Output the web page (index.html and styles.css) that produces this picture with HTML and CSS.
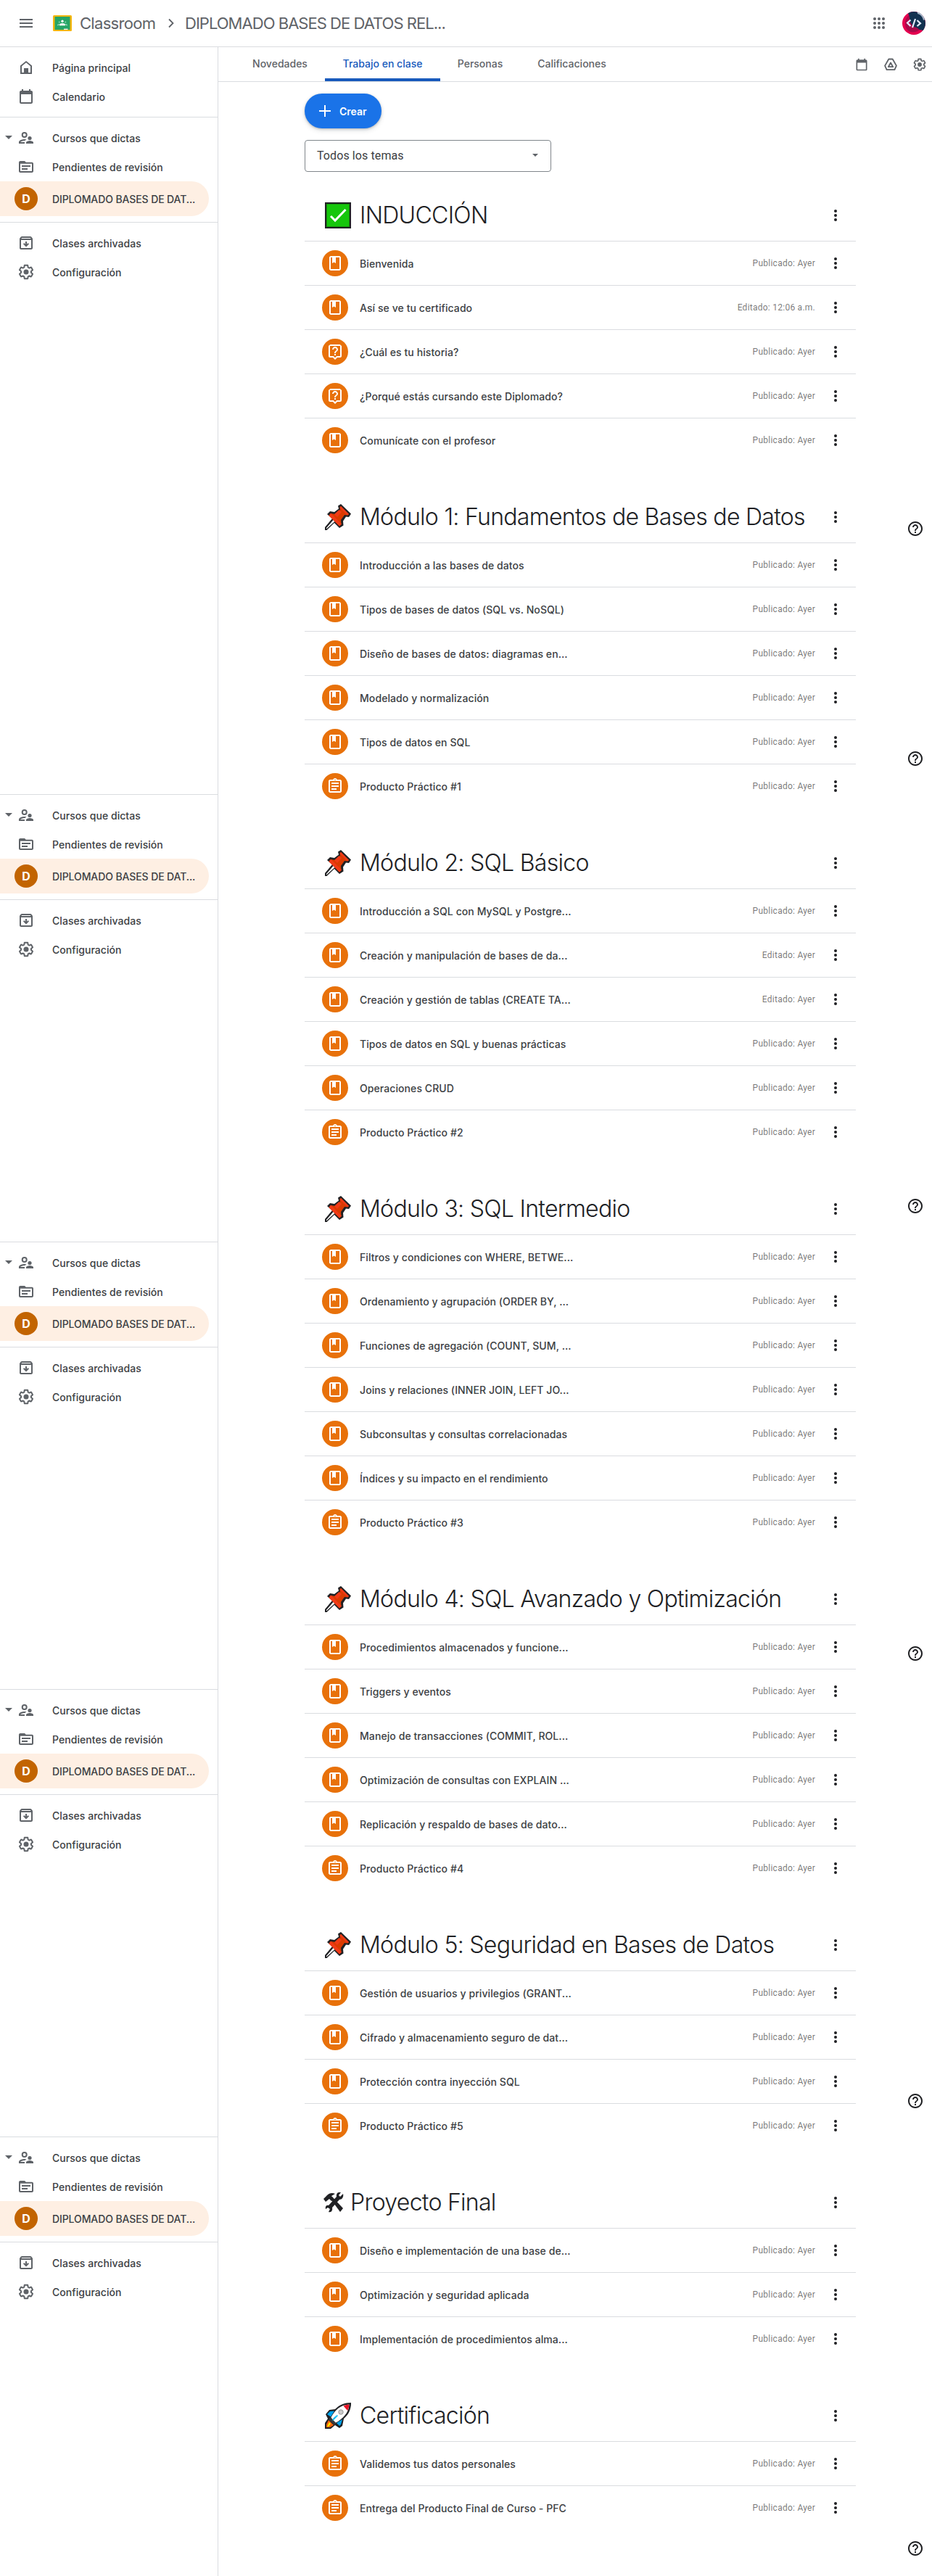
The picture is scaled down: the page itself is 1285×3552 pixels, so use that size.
FILE: index.html
```html
<!DOCTYPE html>
<html lang="es">
<head>
    <meta charset="UTF-8">
    <meta name="viewport" content="width=device-width, initial-scale=1.0">
    <title>Trabajo en clase</title>
    <link rel="stylesheet" href="styles.css">
</head>
<body>
    <!-- Shared icons -->
    <svg class="sprite">
        <symbol id="menu" viewBox="0 0 24 24"><path d="M3 18h18v-2H3v2zm0-5h18v-2H3v2zm0-7v2h18V6H3z"/></symbol>
        <symbol id="home" viewBox="0 0 24 24"><path d="M12 3L4 9.500V21h16V9.500zM6 19v-8.500l6-5 6 5V19z"/><path fill="#fff" d="M6 10.500l6-5 6 5V19H6z"/><path d="M9 13h6v7H9z"/></symbol>
        <symbol id="calendar" viewBox="0 0 24 24"><path d="M19 4h-1V2h-2v2H8V2H6v2H5c-1.110 0-1.990.9-1.990 2L3 20a2 2 0 0 0 2 2h14c1.100 0 2-.9 2-2V6c0-1.100-.9-2-2-2zm0 16H5V9h14v11z"/></symbol>
        <symbol id="people" viewBox="0 0 24 24"><circle cx="9.700" cy="8" r="3" fill="none" stroke="currentColor" stroke-width="2"/><path d="M12.500 14.300c-1-.2-2-.3-2.800-.3C7 14 2 15.300 2 18v2h8v-2H4.200c.5-1 3.200-2 5.500-2h.9c.4-.7 1.100-1.300 1.900-1.700z"/><circle cx="17" cy="12.500" r="2.600"/><path d="M17 16c-1.800 0-5 .9-5 2.700V20h10v-1.300c0-1.800-3.200-2.700-5-2.700z"/></symbol>
        <symbol id="folder" viewBox="0 0 24 24"><path fill-rule="evenodd" d="M4 4h6l1.800 1.700H20c1.100 0 2 .9 2 2V18c0 1.100-.9 2-2 2H4c-1.100 0-2-.9-2-2V6c0-1.100.9-2 2-2zm0 3.700V18h16V7.700zM6 10h12v2H6zm0 4h8v2H6z"/></symbol>
        <symbol id="archive" viewBox="0 0 24 24"><path d="M20.540 5.230l-1.390-1.680C18.880 3.210 18.470 3 18 3H6c-.47 0-.88.21-1.160.55L3.460 5.230C3.170 5.570 3 6.020 3 6.500V19c0 1.100.9 2 2 2h14c1.100 0 2-.9 2-2V6.500c0-.48-.17-.93-.46-1.270zM6.240 5h11.520l.83 1H5.420l.82-1zM5 19V8h14v11H5zm11-5.500l-4 4-4-4 1.410-1.410L11 13.670V10h2v3.670l1.590-1.590L16 13.500z"/></symbol>
        <symbol id="gear" viewBox="0 0 24 24"><path d="M13.850 22.250h-3.700c-.74 0-1.360-.54-1.450-1.270l-.27-1.890c-.27-.14-.53-.29-.79-.46l-1.800.72c-.7.26-1.470-.03-1.810-.65L2.200 15.530c-.35-.66-.2-1.440.36-1.880l1.530-1.190c-.01-.15-.02-.3-.02-.46 0-.15.01-.31.02-.46l-1.520-1.190c-.59-.45-.74-1.260-.37-1.880l1.850-3.190c.34-.62 1.110-.9 1.790-.63l1.810.73c.26-.17.52-.32.78-.46l.27-1.910c.09-.7.71-1.250 1.440-1.250h3.700c.74 0 1.360.54 1.450 1.270l.27 1.890c.27.14.53.29.79.46l1.800-.72c.71-.26 1.480.03 1.820.65l1.840 3.180c.36.66.2 1.440-.36 1.880l-1.520 1.190c.01.15.02.3.02.46s-.01.31-.02.46l1.520 1.190c.56.45.72 1.230.37 1.860l-1.860 3.220c-.34.62-1.110.9-1.800.63l-1.800-.72c-.26.17-.52.32-.78.46l-.27 1.910c-.1.68-.72 1.220-1.460 1.220zm-3.230-2h2.760l.37-2.550.53-.22c.44-.18.88-.44 1.340-.78l.45-.34 2.380.96 1.380-2.400-2.030-1.580.07-.56c.03-.26.06-.51.06-.78s-.03-.53-.06-.78l-.07-.56 2.030-1.580-1.390-2.400-2.390.96-.45-.35c-.42-.32-.87-.58-1.330-.77l-.52-.22-.37-2.550h-2.760l-.37 2.550-.53.21c-.44.19-.88.44-1.340.79l-.45.33-2.380-.95-1.390 2.390 2.030 1.580-.07.56a7 7 0 0 0-.06.79c0 .26.02.53.06.78l.07.56-2.030 1.580 1.380 2.400 2.390-.96.45.35c.43.33.86.58 1.330.77l.53.22.38 2.550z"/><circle cx="12" cy="12" r="3.500"/></symbol>
        <symbol id="drive" viewBox="0 0 24 24"><path fill="none" stroke="currentColor" stroke-width="2.200" stroke-linejoin="round" d="M8.800 3h6.400l6.300 11-3 6.500h-13l-3-6.500zM12 9l-3.800 6.800h7.600z"/></symbol>
        <symbol id="apps" viewBox="0 0 24 24"><circle cx="6" cy="6" r="2"/><circle cx="12" cy="6" r="2"/><circle cx="18" cy="6" r="2"/><circle cx="6" cy="12" r="2"/><circle cx="12" cy="12" r="2"/><circle cx="18" cy="12" r="2"/><circle cx="6" cy="18" r="2"/><circle cx="12" cy="18" r="2"/><circle cx="18" cy="18" r="2"/></symbol>
        <symbol id="more" viewBox="0 0 24 24"><circle cx="12" cy="6" r="2"/><circle cx="12" cy="12" r="2"/><circle cx="12" cy="18" r="2"/></symbol>
        <symbol id="help" viewBox="0 0 24 24"><path d="M11 18h2v-2h-2v2zm1-16C6.480 2 2 6.480 2 12s4.480 10 10 10 10-4.480 10-10S17.520 2 12 2zm0 18c-4.410 0-8-3.590-8-8s3.590-8 8-8 8 3.590 8 8-3.590 8-8 8zm0-14c-2.210 0-4 1.790-4 4h2c0-1.100.9-2 2-2s2 .9 2 2c0 2-3 1.750-3 5h2c0-2.250 3-2.500 3-5 0-2.210-1.790-4-4-4z"/></symbol>
        <symbol id="book" viewBox="0 0 24 24"><path d="M18 2H6c-1.100 0-2 .9-2 2v16c0 1.100.9 2 2 2h12c1.100 0 2-.9 2-2V4c0-1.100-.9-2-2-2zm0 18H6V4h2v8l2.500-1.500L13 12V4h5v16z"/></symbol>
        <symbol id="question" viewBox="0 0 24 24"><path d="M19 2H5c-1.110 0-2 .9-2 2v14c0 1.100.89 2 2 2h4l3 3 3-3h4c1.100 0 2-.9 2-2V4c0-1.100-.9-2-2-2zm0 16h-4.830L12 20.170 9.830 18H5V4h14v14zm-8-3h2v2h-2zm1-8c1.100 0 2 .9 2 2 0 2-3 1.750-3 5h2c0-2.250 3-2.500 3-5 0-2.210-1.790-4-4-4s-4 1.790-4 4h2c0-1.100.9-2 2-2z"/></symbol>
        <symbol id="task" viewBox="0 0 24 24"><path d="M7 15h7v2H7zm0-4h10v2H7zm0-4h10v2H7zm12-4h-4.180C14.400 1.840 13.300 1 12 1c-1.300 0-2.400.84-2.820 2H5c-1.100 0-2 .9-2 2v14c0 1.100.9 2 2 2h14c1.100 0 2-.9 2-2V5c0-1.100-.9-2-2-2zm-7-.25c.41 0 .75.34.75.75s-.34.75-.75.75-.75-.34-.75-.75.34-.75.75-.75zM19 19H5V5h14v14z"/></symbol>
        <symbol id="check" viewBox="0 0 36 36"><path d="M0 0h36v36H0z"/><path fill="#148f0b" d="M2 2h32v32H2z"/><path fill="#16c60c" d="M3 3h30v30H3z"/><path fill="none" stroke="#fff" stroke-width="3" d="M8 19l6 6L28.500 10"/></symbol>
        <symbol id="pin" viewBox="0 0 36 36"><path d="M22 0L36 13.500l-3 4.500-4-.5-4 6 .5 6L20 33l-7-7L2.500 36H0v-4l10-12-7-6 4-4 6 1 6-4.500-1-4z"/><path fill="#fff" d="M11.500 22l2 2L2.500 34H2v-1z"/><path fill="#da3b01" d="M22 3l11 11-2 1.500-4-.5-5 7 .5 6-2.500 2.500L5.500 16l3-3 5.500 1 7-6-.5-3.500z"/><path fill="#f03a17" d="M22 3l11 11-2 1.500L20.500 5zM8 12.500L23 27.500 20 30.500 5.500 16zM19.500 8l3.500 3-6 7-4-4z"/></symbol>
        <symbol id="tools" viewBox="0 0 28 28"><path d="M0 9l5-5c3-3 7-4 11-2l-5 3 3 4-3 3-3-3-5 4z"/><path d="M9 8l3-2 15 16-4 5z"/><path d="M27 2l-4 4-2-2 3-4c-4-1-7 2-6 6L7 18c-3-1-5 2-4 5l3-2 3 2-2 4c3 1 6-1 5-6L22 10c4 0 6-4 5-8z"/></symbol>
        <symbol id="rocket" viewBox="0 0 36 36"><path d="M36 0v3c-1 8-4 14-10 19l-2 10-4 3-6-4-6 5H0v-8l4-6-3-6 5-6 8-1C20 3 27 0 36 0z"/><path fill="#fff" d="M33.500 2.500C33 11 29 18 18 26l-4 2-6-7C14 10 21 3 33.500 2.500z"/><path fill="#e81224" d="M25.500 4.500c2.500-1.300 5-2 8-2-.3 3-1 6-2.300 8.500z"/><path fill="#00a4ef" d="M3 16l4-4 6-.5-5 8zM24 23l-2 7-2 2-4-4zM11 22l6-6-5 7z"/><path fill="#383838" d="M8 20l8 9-3 2-8-8z"/><path fill="#f7630c" d="M5 24l7 7-5 3H2v-4z"/><path fill="#fff100" d="M6 27l2 2-3 4H3z"/><path fill="#00bcf2" d="M17 17l1 1-7 7-1-1z"/><circle cx="22" cy="13" r="3.200" fill="#ccc" stroke="#999"/></symbol>
    </svg>

    <header class="topbar">
        <svg class="icon menu-icon"><use href="#menu"/></svg>
        <svg class="logo" viewBox="0 0 26 22"><rect width="26" height="22" rx="1.500" fill="#f6b60d"/><rect x="2.500" y="2" width="21" height="18" fill="#25a566"/><circle cx="13" cy="8.200" r="1.700" fill="#fff"/><path fill="#fff" d="M9 14.200v-1c0-1.500 2-2.300 4-2.300s4 .8 4 2.300v1z"/><circle cx="8.700" cy="9.600" r="1" fill="#8fd4b3"/><circle cx="17.300" cy="9.600" r="1" fill="#8fd4b3"/><path fill="#8fd4b3" d="M6 14.200v-.8c0-1 1.500-1.600 3-1.500L8 14.200zm14 0v-.8c0-1-1.500-1.600-3-1.500l1 2.300z"/><rect x="15" y="18.600" width="5.500" height="1.400" fill="#f1f1f1"/></svg>
        <span class="brand">Classroom</span>
        <svg class="chevron" viewBox="0 0 10 14"><path d="M2 1.500L7.500 7 2 12.500" fill="none" stroke="#5f6368" stroke-width="1.800"/></svg>
        <span class="course-name">DIPLOMADO BASES DE DATOS REL...</span>
        <svg class="icon apps-icon"><use href="#apps"/></svg>
        <svg class="avatar" viewBox="0 0 32 32"><circle cx="16" cy="16" r="16" fill="#e5004f"/><path fill="#a9094a" d="M9 5C1 12 3 26 12 28c6 1 10-1 13-4L16 8z"/><path fill="#123250" d="M8 2.200A16 16 0 0 1 28.500 26c-3-1-4 0-7-3-3-2-6-1-9-6-3-4-1-8-4.500-14.800z"/><path fill="#a9b7c8" d="M21 1l1-.2a16 16 0 0 1 9 10L29 12c-1-5-4-8-8-9z"/><path fill="none" stroke="#e4ecff" stroke-width="2.200" d="M11.500 11.500L7 15.500l4.500 4.500M18 10l-4 12M20.500 12l4.500 4.200-4.500 3.800"/></svg>
    </header>

    <div class="layout">
        <nav class="drawer">
            <div class="drawer-top">
                <a class="nav-item"><svg class="icon"><use href="#home"/></svg>Página principal</a>
                <a class="nav-item"><svg class="icon"><use href="#calendar"/></svg>Calendario</a>
            </div>
            <div class="nav-group first">
                <a class="nav-item"><i class="caret"></i><svg class="icon"><use href="#people"/></svg>Cursos que dictas</a>
                <a class="nav-item"><svg class="icon"><use href="#folder"/></svg>Pendientes de revisión</a>
                <a class="nav-item active"><b class="badge">D</b>DIPLOMADO BASES DE DAT...</a>
                <div class="nav-sub">
                    <a class="nav-item"><svg class="icon"><use href="#archive"/></svg>Clases archivadas</a>
                    <a class="nav-item"><svg class="icon"><use href="#gear"/></svg>Configuración</a>
                </div>
            </div>
            <div class="nav-group">
                <a class="nav-item"><i class="caret"></i><svg class="icon"><use href="#people"/></svg>Cursos que dictas</a>
                <a class="nav-item"><svg class="icon"><use href="#folder"/></svg>Pendientes de revisión</a>
                <a class="nav-item active"><b class="badge">D</b>DIPLOMADO BASES DE DAT...</a>
                <div class="nav-sub">
                    <a class="nav-item"><svg class="icon"><use href="#archive"/></svg>Clases archivadas</a>
                    <a class="nav-item"><svg class="icon"><use href="#gear"/></svg>Configuración</a>
                </div>
            </div>
            <div class="nav-group">
                <a class="nav-item"><i class="caret"></i><svg class="icon"><use href="#people"/></svg>Cursos que dictas</a>
                <a class="nav-item"><svg class="icon"><use href="#folder"/></svg>Pendientes de revisión</a>
                <a class="nav-item active"><b class="badge">D</b>DIPLOMADO BASES DE DAT...</a>
                <div class="nav-sub">
                    <a class="nav-item"><svg class="icon"><use href="#archive"/></svg>Clases archivadas</a>
                    <a class="nav-item"><svg class="icon"><use href="#gear"/></svg>Configuración</a>
                </div>
            </div>
            <div class="nav-group">
                <a class="nav-item"><i class="caret"></i><svg class="icon"><use href="#people"/></svg>Cursos que dictas</a>
                <a class="nav-item"><svg class="icon"><use href="#folder"/></svg>Pendientes de revisión</a>
                <a class="nav-item active"><b class="badge">D</b>DIPLOMADO BASES DE DAT...</a>
                <div class="nav-sub">
                    <a class="nav-item"><svg class="icon"><use href="#archive"/></svg>Clases archivadas</a>
                    <a class="nav-item"><svg class="icon"><use href="#gear"/></svg>Configuración</a>
                </div>
            </div>
            <div class="nav-group">
                <a class="nav-item"><i class="caret"></i><svg class="icon"><use href="#people"/></svg>Cursos que dictas</a>
                <a class="nav-item"><svg class="icon"><use href="#folder"/></svg>Pendientes de revisión</a>
                <a class="nav-item active"><b class="badge">D</b>DIPLOMADO BASES DE DAT...</a>
                <div class="nav-sub">
                    <a class="nav-item"><svg class="icon"><use href="#archive"/></svg>Clases archivadas</a>
                    <a class="nav-item"><svg class="icon"><use href="#gear"/></svg>Configuración</a>
                </div>
            </div>
        </nav>

        <div class="page">
            <div class="tabs">
                <a class="tab tab-news">Novedades</a>
                <a class="tab tab-work selected">Trabajo en clase</a>
                <a class="tab tab-people">Personas</a>
                <a class="tab tab-grades">Calificaciones</a>
                <div class="tab-actions">
                    <svg class="icon-small"><use href="#calendar"/></svg>
                    <svg class="icon-small"><use href="#drive"/></svg>
                    <svg class="icon-small"><use href="#gear"/></svg>
                </div>
            </div>

            <main class="content">
                <button class="create"><svg viewBox="0 0 16 16"><path d="M7 0h2v7h7v2H9v7H7V9H0V7h7z"/></svg>Crear</button>
                <div class="topic-select">Todos los temas<i class="select-arrow"></i></div>

                <section class="topic">
                    <div class="topic-head"><svg class="emoji"><use href="#check"/></svg><h2 class="caps">INDUCCIÓN</h2><svg class="more"><use href="#more"/></svg></div>
                    <div class="row"><svg class="kind"><use href="#book"/></svg><span class="title">Bienvenida</span><span class="date">Publicado: Ayer</span><svg class="more"><use href="#more"/></svg></div>
                    <div class="row"><svg class="kind"><use href="#book"/></svg><span class="title">Así se ve tu certificado</span><span class="date">Editado: 12:06 a.m.</span><svg class="more"><use href="#more"/></svg></div>
                    <div class="row"><svg class="kind"><use href="#question"/></svg><span class="title">¿Cuál es tu historia?</span><span class="date">Publicado: Ayer</span><svg class="more"><use href="#more"/></svg></div>
                    <div class="row"><svg class="kind"><use href="#question"/></svg><span class="title">¿Porqué estás cursando este Diplomado?</span><span class="date">Publicado: Ayer</span><svg class="more"><use href="#more"/></svg></div>
                    <div class="row"><svg class="kind"><use href="#book"/></svg><span class="title">Comunícate con el profesor</span><span class="date">Publicado: Ayer</span><svg class="more"><use href="#more"/></svg></div>
                </section>

                <section class="topic">
                    <div class="topic-head"><svg class="emoji"><use href="#pin"/></svg><h2>Módulo 1: Fundamentos de Bases de Datos</h2><svg class="more"><use href="#more"/></svg></div>
                    <div class="row"><svg class="kind"><use href="#book"/></svg><span class="title">Introducción a las bases de datos</span><span class="date">Publicado: Ayer</span><svg class="more"><use href="#more"/></svg></div>
                    <div class="row"><svg class="kind"><use href="#book"/></svg><span class="title">Tipos de bases de datos (SQL vs. NoSQL)</span><span class="date">Publicado: Ayer</span><svg class="more"><use href="#more"/></svg></div>
                    <div class="row"><svg class="kind"><use href="#book"/></svg><span class="title">Diseño de bases de datos: diagramas en...</span><span class="date">Publicado: Ayer</span><svg class="more"><use href="#more"/></svg></div>
                    <div class="row"><svg class="kind"><use href="#book"/></svg><span class="title">Modelado y normalización</span><span class="date">Publicado: Ayer</span><svg class="more"><use href="#more"/></svg></div>
                    <div class="row"><svg class="kind"><use href="#book"/></svg><span class="title">Tipos de datos en SQL</span><span class="date">Publicado: Ayer</span><svg class="more"><use href="#more"/></svg></div>
                    <div class="row"><svg class="kind"><use href="#task"/></svg><span class="title">Producto Práctico #1</span><span class="date">Publicado: Ayer</span><svg class="more"><use href="#more"/></svg></div>
                </section>

                <section class="topic">
                    <div class="topic-head"><svg class="emoji"><use href="#pin"/></svg><h2>Módulo 2: SQL Básico</h2><svg class="more"><use href="#more"/></svg></div>
                    <div class="row"><svg class="kind"><use href="#book"/></svg><span class="title">Introducción a SQL con MySQL y Postgre...</span><span class="date">Publicado: Ayer</span><svg class="more"><use href="#more"/></svg></div>
                    <div class="row"><svg class="kind"><use href="#book"/></svg><span class="title">Creación y manipulación de bases de da...</span><span class="date">Editado: Ayer</span><svg class="more"><use href="#more"/></svg></div>
                    <div class="row"><svg class="kind"><use href="#book"/></svg><span class="title">Creación y gestión de tablas (CREATE TA...</span><span class="date">Editado: Ayer</span><svg class="more"><use href="#more"/></svg></div>
                    <div class="row"><svg class="kind"><use href="#book"/></svg><span class="title">Tipos de datos en SQL y buenas prácticas</span><span class="date">Publicado: Ayer</span><svg class="more"><use href="#more"/></svg></div>
                    <div class="row"><svg class="kind"><use href="#book"/></svg><span class="title">Operaciones CRUD</span><span class="date">Publicado: Ayer</span><svg class="more"><use href="#more"/></svg></div>
                    <div class="row"><svg class="kind"><use href="#task"/></svg><span class="title">Producto Práctico #2</span><span class="date">Publicado: Ayer</span><svg class="more"><use href="#more"/></svg></div>
                </section>

                <section class="topic">
                    <div class="topic-head"><svg class="emoji"><use href="#pin"/></svg><h2>Módulo 3: SQL Intermedio</h2><svg class="more"><use href="#more"/></svg></div>
                    <div class="row"><svg class="kind"><use href="#book"/></svg><span class="title">Filtros y condiciones con WHERE, BETWE...</span><span class="date">Publicado: Ayer</span><svg class="more"><use href="#more"/></svg></div>
                    <div class="row"><svg class="kind"><use href="#book"/></svg><span class="title">Ordenamiento y agrupación (ORDER BY, ...</span><span class="date">Publicado: Ayer</span><svg class="more"><use href="#more"/></svg></div>
                    <div class="row"><svg class="kind"><use href="#book"/></svg><span class="title">Funciones de agregación (COUNT, SUM, ...</span><span class="date">Publicado: Ayer</span><svg class="more"><use href="#more"/></svg></div>
                    <div class="row"><svg class="kind"><use href="#book"/></svg><span class="title">Joins y relaciones (INNER JOIN, LEFT JO...</span><span class="date">Publicado: Ayer</span><svg class="more"><use href="#more"/></svg></div>
                    <div class="row"><svg class="kind"><use href="#book"/></svg><span class="title">Subconsultas y consultas correlacionadas</span><span class="date">Publicado: Ayer</span><svg class="more"><use href="#more"/></svg></div>
                    <div class="row"><svg class="kind"><use href="#book"/></svg><span class="title">Índices y su impacto en el rendimiento</span><span class="date">Publicado: Ayer</span><svg class="more"><use href="#more"/></svg></div>
                    <div class="row"><svg class="kind"><use href="#task"/></svg><span class="title">Producto Práctico #3</span><span class="date">Publicado: Ayer</span><svg class="more"><use href="#more"/></svg></div>
                </section>

                <section class="topic">
                    <div class="topic-head"><svg class="emoji"><use href="#pin"/></svg><h2>Módulo 4: SQL Avanzado y Optimización</h2><svg class="more"><use href="#more"/></svg></div>
                    <div class="row"><svg class="kind"><use href="#book"/></svg><span class="title">Procedimientos almacenados y funcione...</span><span class="date">Publicado: Ayer</span><svg class="more"><use href="#more"/></svg></div>
                    <div class="row"><svg class="kind"><use href="#book"/></svg><span class="title">Triggers y eventos</span><span class="date">Publicado: Ayer</span><svg class="more"><use href="#more"/></svg></div>
                    <div class="row"><svg class="kind"><use href="#book"/></svg><span class="title">Manejo de transacciones (COMMIT, ROL...</span><span class="date">Publicado: Ayer</span><svg class="more"><use href="#more"/></svg></div>
                    <div class="row"><svg class="kind"><use href="#book"/></svg><span class="title">Optimización de consultas con EXPLAIN ...</span><span class="date">Publicado: Ayer</span><svg class="more"><use href="#more"/></svg></div>
                    <div class="row"><svg class="kind"><use href="#book"/></svg><span class="title">Replicación y respaldo de bases de dato...</span><span class="date">Publicado: Ayer</span><svg class="more"><use href="#more"/></svg></div>
                    <div class="row"><svg class="kind"><use href="#task"/></svg><span class="title">Producto Práctico #4</span><span class="date">Publicado: Ayer</span><svg class="more"><use href="#more"/></svg></div>
                </section>

                <section class="topic">
                    <div class="topic-head"><svg class="emoji"><use href="#pin"/></svg><h2>Módulo 5: Seguridad en Bases de Datos</h2><svg class="more"><use href="#more"/></svg></div>
                    <div class="row"><svg class="kind"><use href="#book"/></svg><span class="title">Gestión de usuarios y privilegios (GRANT...</span><span class="date">Publicado: Ayer</span><svg class="more"><use href="#more"/></svg></div>
                    <div class="row"><svg class="kind"><use href="#book"/></svg><span class="title">Cifrado y almacenamiento seguro de dat...</span><span class="date">Publicado: Ayer</span><svg class="more"><use href="#more"/></svg></div>
                    <div class="row"><svg class="kind"><use href="#book"/></svg><span class="title">Protección contra inyección SQL</span><span class="date">Publicado: Ayer</span><svg class="more"><use href="#more"/></svg></div>
                    <div class="row"><svg class="kind"><use href="#task"/></svg><span class="title">Producto Práctico #5</span><span class="date">Publicado: Ayer</span><svg class="more"><use href="#more"/></svg></div>
                </section>

                <section class="topic">
                    <div class="topic-head"><svg class="emoji tools"><use href="#tools"/></svg><h2>Proyecto Final</h2><svg class="more"><use href="#more"/></svg></div>
                    <div class="row"><svg class="kind"><use href="#book"/></svg><span class="title">Diseño e implementación de una base de...</span><span class="date">Publicado: Ayer</span><svg class="more"><use href="#more"/></svg></div>
                    <div class="row"><svg class="kind"><use href="#book"/></svg><span class="title">Optimización y seguridad aplicada</span><span class="date">Publicado: Ayer</span><svg class="more"><use href="#more"/></svg></div>
                    <div class="row"><svg class="kind"><use href="#book"/></svg><span class="title">Implementación de procedimientos alma...</span><span class="date">Publicado: Ayer</span><svg class="more"><use href="#more"/></svg></div>
                </section>

                <section class="topic">
                    <div class="topic-head"><svg class="emoji"><use href="#rocket"/></svg><h2>Certificación</h2><svg class="more"><use href="#more"/></svg></div>
                    <div class="row"><svg class="kind"><use href="#task"/></svg><span class="title">Validemos tus datos personales</span><span class="date">Publicado: Ayer</span><svg class="more"><use href="#more"/></svg></div>
                    <div class="row"><svg class="kind"><use href="#task"/></svg><span class="title">Entrega del Producto Final de Curso - PFC</span><span class="date">Publicado: Ayer</span><svg class="more"><use href="#more"/></svg></div>
                </section>
            </main>
        </div>
    </div>

    <div class="help-column">
        <svg class="help first-help"><use href="#help"/></svg>
        <svg class="help"><use href="#help"/></svg>
        <svg class="help"><use href="#help"/></svg>
        <svg class="help"><use href="#help"/></svg>
        <svg class="help"><use href="#help"/></svg>
        <svg class="help"><use href="#help"/></svg>
    </div>
</body>
</html>
```

FILE: styles.css
```css
* {
    box-sizing: border-box;
}
body {
    font-family: Inter, Roboto, sans-serif;
    margin: 0;
    position: relative;
    background-color: #fff;
    color: #3c4043;
}
.sprite {
    display: none;
}
svg {
    display: block;
    flex-shrink: 0;
    fill: currentColor;
}
.icon {
    width: 24px;
    height: 24px;
    color: #5f6368;
}
.icon-small {
    width: 20px;
    height: 20px;
    color: #5f6368;
}

/* Top bar */
.topbar {
    display: flex;
    align-items: center;
    height: 65px;
    padding: 0 9px 0 24px;
    border-bottom: 1px solid #dadce0;
    color: #5f6368;
    font-size: 22px;
    white-space: nowrap;
}
.logo {
    width: 26px;
    height: 22px;
    margin-left: 25px;
}
.brand {
    width: 106px;
    margin-left: 11px;
    letter-spacing: -0.7px;
}
.chevron {
    width: 10px;
    height: 14px;
    margin: 0 14px 0 15px;
}
.course-name {
    letter-spacing: -0.97px;
}
.apps-icon {
    margin-left: auto;
}
.avatar {
    width: 32px;
    height: 32px;
    margin-left: 20px;
}

/* Side navigation */
.layout {
    display: flex;
    height: 3487px;
}
.drawer {
    width: 301px;
    flex-shrink: 0;
    border-right: 1px solid #dadce0;
}
.drawer-top {
    height: 96px;
    padding-top: 8px;
}
.nav-group {
    height: 617px;
    padding-top: 8px;
    border-top: 1px solid #dadce0;
    overflow: hidden;
}
.nav-group.first {
    height: 934px;
}
.nav-group:last-child {
    height: 606px;
}
.nav-item {
    display: flex;
    align-items: center;
    position: relative;
    height: 40px;
    padding-left: 24px;
    font-size: 14px;
    font-weight: 500;
    letter-spacing: 0.05px;
    white-space: nowrap;
}
.nav-item .icon {
    margin-right: 24px;
}
.caret {
    position: absolute;
    left: 7px;
    top: 17px;
    border: 5px solid transparent;
    border-top-color: #5f6368;
    border-bottom: 0;
}
.nav-item.active {
    width: 288px;
    height: 48px;
    padding-left: 20px;
    background-color: #feefe3;
    border-radius: 0 24px 24px 0;
    letter-spacing: -0.1px;
}
.badge {
    width: 32px;
    height: 32px;
    margin-right: 20px;
    border-radius: 50%;
    background-color: #c26401;
    color: #fff;
    font-size: 16px;
    line-height: 32px;
    text-align: center;
}
.nav-sub {
    margin-top: 8px;
    padding-top: 8px;
    border-top: 1px solid #dadce0;
}

/* Tabs */
.page {
    flex: 1;
}
.tabs {
    display: flex;
    height: 48px;
    padding-left: 23px;
    border-bottom: 1px solid #dadce0;
    color: #5f6368;
    font-size: 14px;
    font-weight: 500;
}
.tab {
    text-align: center;
    line-height: 46px;
}
.tab-news {
    width: 124px;
}
.tab-work {
    width: 159px;
}
.tab-people {
    width: 110px;
}
.tab-grades {
    width: 143px;
}
.tab.selected {
    color: #185abc;
    background: linear-gradient(#185abc, #185abc) bottom / 100% 4px no-repeat;
}
.tab-actions {
    display: flex;
    align-items: center;
    gap: 20px;
    margin-left: auto;
    padding-right: 7px;
}

/* Class work */
.content {
    width: 760px;
    margin-left: 119px;
    padding-top: 16px;
}
.create {
    display: flex;
    align-items: center;
    width: 106px;
    height: 48px;
    padding: 0 0 0 20px;
    border: none;
    border-radius: 24px;
    background-color: #1a73e8;
    box-shadow: 0 1px 3px rgba(60, 64, 67, 0.3), 0 3px 6px rgba(60, 64, 67, 0.15);
    color: #fff;
    font: 600 14px Inter, Roboto, sans-serif;
}
.create svg {
    width: 16px;
    height: 16px;
    margin-right: 12px;
}
.topic-select {
    display: flex;
    align-items: center;
    justify-content: space-between;
    width: 340px;
    height: 44px;
    margin-top: 16px;
    padding: 0 17px 2px 16px;
    border: 1px solid #80868b;
    border-radius: 4px;
    font: 16px Roboto, sans-serif;
    letter-spacing: 0.1px;
}
.select-arrow {
    border: 4px solid transparent;
    border-top-color: #5f6368;
    border-bottom: 0;
}
.topic {
    margin-top: 40px;
}
.topic-select + .topic {
    margin-top: 24px;
}
.topic-head {
    display: flex;
    align-items: center;
    height: 72px;
    padding: 0 16px 0 28px;
    border-bottom: 1px solid #dadce0;
    color: #202124;
}
.topic-head h2 {
    margin: 0;
    font-size: 32px;
    font-weight: 300;
    letter-spacing: -0.7px;
    white-space: nowrap;
}
.emoji {
    width: 36px;
    height: 36px;
    margin-right: 12px;
}
.emoji.tools {
    width: 28px;
    height: 28px;
    margin: 0 9px 0 -2px;
}
.more {
    width: 24px;
    height: 24px;
    margin-left: auto;
    color: #202124;
}
.row {
    display: flex;
    align-items: center;
    height: 61px;
    padding: 0 16px 0 24px;
    border-bottom: 1px solid #dadce0;
}
.row:last-child {
    height: 60px;
    border-bottom: none;
}
.kind {
    width: 36px;
    height: 36px;
    padding: 6px;
    margin-right: 16px;
    border-radius: 50%;
    background-color: #e8710a;
    color: #fff;
}
.title {
    font-size: 14px;
    font-weight: 500;
    letter-spacing: 0.08px;
    white-space: nowrap;
}
.date {
    margin-left: auto;
    color: rgba(0, 0, 0, 0.55);
    font: 12px Roboto, sans-serif;
    letter-spacing: 0.25px;
}
.row .more {
    margin-left: 16px;
}

/* Help buttons float over the page */
.help-column {
    position: absolute;
    top: 717px;
    right: 11px;
    display: flex;
    flex-direction: column;
    gap: 593px;
}
.help {
    width: 24px;
    height: 24px;
    color: #202124;
}
.first-help {
    margin-bottom: -300px;
}
```
